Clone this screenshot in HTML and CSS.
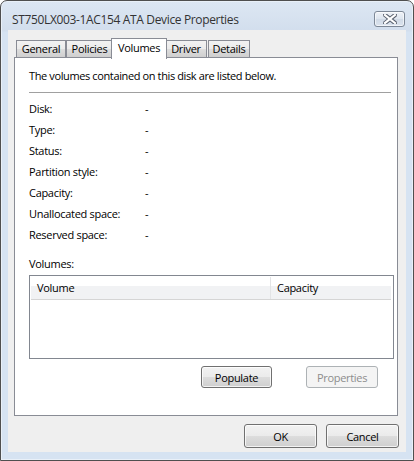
FILE: index.html
```html
<!DOCTYPE html>
<html>
<head>
<meta charset="utf-8">
<link rel="stylesheet" href="styles.css">
</head>
<body>
<div class="window">
  <div class="titlebar">
    <div class="title">ST750LX003-1AC154 ATA Device Properties</div>
    <div class="close">
      <svg width="14" height="10" viewBox="0 0 14 10">
        <path d="M2 1 L12 9 M12 1 L2 9" stroke="#5a6270" stroke-width="4.2" stroke-linecap="square"/>
        <path d="M2 1 L12 9 M12 1 L2 9" stroke="#ffffff" stroke-width="2.2" stroke-linecap="square"/>
      </svg>
    </div>
  </div>
  <div class="client">
    <div class="tabs">
      <div class="tab t-gen">General</div>
      <div class="tab t-pol">Policies</div>
      <div class="tab t-vol active">Volumes</div>
      <div class="tab t-drv">Driver</div>
      <div class="tab t-det">Details</div>
    </div>
    <div class="panel">
      <div class="intro">The volumes contained on this disk are listed below.</div>
      <div class="sep"></div>
      <div class="rows">
        <div class="row"><span class="lbl">Disk:</span><span class="val">-</span></div>
        <div class="row"><span class="lbl">Type:</span><span class="val">-</span></div>
        <div class="row"><span class="lbl">Status:</span><span class="val">-</span></div>
        <div class="row"><span class="lbl">Partition style:</span><span class="val">-</span></div>
        <div class="row"><span class="lbl">Capacity:</span><span class="val">-</span></div>
        <div class="row"><span class="lbl">Unallocated space:</span><span class="val">-</span></div>
        <div class="row"><span class="lbl">Reserved space:</span><span class="val">-</span></div>
      </div>
      <div class="vol-label">Volumes:</div>
      <div class="list">
        <div class="list-head">
          <div class="col col-vol">Volume</div>
          <div class="col col-cap">Capacity</div>
        </div>
      </div>
      <div class="panel-buttons">
        <div class="btn btn-pop">Populate</div>
        <div class="btn btn-prop disabled">Properties</div>
      </div>
    </div>
    <div class="footer">
      <div class="btn btn-dlg">OK</div>
      <div class="btn btn-dlg">Cancel</div>
    </div>
  </div>
</div>
</body>
</html>
```

FILE: styles.css
```css
* { box-sizing: border-box; }
html, body {
  margin: 0;
  padding: 0;
  background: #ffffff;
}
body {
  font-family: "Open Sans", "Liberation Sans", sans-serif;
  font-size: 11px;
  letter-spacing: -0.3px;
  color: #000;
  width: 414px;
  height: 461px;
  overflow: hidden;
}
.window {
  width: 414px;
  height: 461px;
  border: 1px solid #4f4f4f;
  border-radius: 7px 7px 0 0;
  background: linear-gradient(to bottom, #dde7f3 0px, #d2deed 30px, #d6e3f2 31px, #d6e3f2 100%);
  box-shadow: inset 0 0 0 1px #e9f0f8;
  display: flex;
  flex-direction: column;
}
.titlebar {
  height: 29px;
  display: flex;
  align-items: flex-start;
  justify-content: space-between;
  padding: 0 8px 0 11px;
}
.title {
  font-size: 12px;
  letter-spacing: -0.35px;
  color: #333333;
  margin-top: 10px;
  line-height: 17px;
}
.close {
  margin-top: 10px;
  width: 31px;
  height: 16px;
  border: 1px solid #7d8897;
  border-radius: 3px;
  background: linear-gradient(to bottom, #eef2f7 0%, #dde5ef 50%, #d0dae6 51%, #dbe3ee 100%);
  box-shadow: inset 0 0 0 1px rgba(255,255,255,0.6);
  display: flex;
  align-items: center;
  justify-content: center;
}
.client {
  margin: 0 7px 8px 7px;
  flex: 1;
  background: #efefef;
  display: flex;
  flex-direction: column;
  padding: 0 0 0 6px;
}
.tabs {
  display: flex;
  align-items: flex-end;
  height: 28px;
  padding-left: 2px;
  position: relative;
  z-index: 1;
}
.tab {
  height: 17px;
  border: 1px solid #898c95;
  border-bottom: none;
  background: linear-gradient(to bottom, #f2f2f2 0%, #ebebeb 50%, #dddddd 51%, #cfcfcf 100%);
  line-height: 15px;
  text-align: center;
  margin-bottom: 1px;
}
.t-gen { width: 50px; }
.t-pol { width: 47px; }
.t-drv { width: 42px; }
.t-det { width: 42px; margin-left: 1px; }
.tab.active {
  width: 56px;
  height: 21px;
  background: #ffffff;
  margin: 0 -2px -1px -2px;
  line-height: 17px;
  position: relative;
  z-index: 2;
}
.panel {
  width: 384px;
  height: 359px;
  margin-top: -1px;
  border: 1px solid #898c95;
  background: #ffffff;
  padding: 10px 6px 0 14px;
}
.intro {
  line-height: 16px;
  letter-spacing: -0.38px;
}
.sep {
  margin-top: 8px;
  height: 1px;
  background: #a0a0a0;
  width: 362px;
}
.rows {
  margin-top: 5px;
  display: flex;
  flex-direction: column;
}
.row {
  height: 21px;
  line-height: 21px;
  display: flex;
}
.lbl {
  width: 116px;
}
.vol-label {
  margin-top: 11px;
  line-height: 16px;
}
.list {
  margin-top: 3px;
  width: 365px;
  height: 84px;
  border: 1px solid #828790;
  background: #fff;
  padding: 1px;
}
.list-head {
  display: flex;
  height: 23px;
  background: linear-gradient(to bottom, #ffffff 0%, #ffffff 40%, #f1f2f4 41%, #f1f2f4 100%);
  border-bottom: 1px solid #d5d5d5;
  width: 360px;
}
.col {
  line-height: 22px;
  padding-left: 6px;
}
.col-vol {
  width: 240px;
  border-right: 1px solid #e3e4e6;
}
.col-cap {
  flex: 1;
}
.panel-buttons {
  display: flex;
  margin-top: 7px;
  padding-left: 172px;
  gap: 34px;
}
.btn {
  height: 22px;
  border: 1px solid #707070;
  border-radius: 3px;
  background: linear-gradient(to bottom, #f2f2f2 0%, #ebebeb 49%, #dddddd 50%, #cfcfcf 100%);
  box-shadow: inset 0 0 0 1px rgba(255,255,255,0.75);
  display: flex;
  align-items: center;
  justify-content: center;
}
.btn-pop { width: 71px; }
.btn-prop { width: 72px; }
.btn.disabled {
  color: #8d8d8d;
  border-color: #adb2b5;
  background: #f4f4f4;
  box-shadow: none;
}
.footer {
  display: flex;
  justify-content: flex-end;
  gap: 9px;
  margin-top: 8px;
  padding-right: 7px;
}
.btn-dlg {
  width: 73px;
  height: 24px;
}
```
